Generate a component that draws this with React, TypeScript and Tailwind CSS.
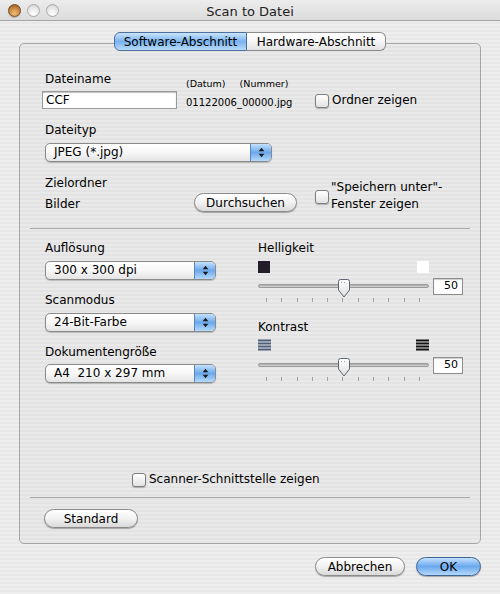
import React from "react";

const stripes =
  "bg-[repeating-linear-gradient(180deg,#eeeeee_0px,#eeeeee_2px,#e8e8e8_2px,#e8e8e8_4px)]";

function Arrows() {
  return (
    <svg width="7" height="11" viewBox="0 0 7 11">
      <path d="M3.5 0.8L6.3 4.2H0.7Z" fill="#1a1a1a" />
      <path d="M3.5 10.2L6.3 6.8H0.7Z" fill="#1a1a1a" />
    </svg>
  );
}

function Popup({ width, label }: { width: string; label: string }) {
  return (
    <div
      className={`flex h-[19px] ${width} overflow-hidden rounded-[5px] border border-[#8a8a8a] bg-gradient-to-b from-white via-[#f7f7f7] to-[#e4e4e4] shadow-[0_1px_1px_rgba(0,0,0,0.2)]`}
    >
      <div className="flex-1 whitespace-pre pl-[8px] text-[12px] leading-[17px] text-black">{label}</div>
      <div className="flex w-[21px] items-center justify-center border-l border-[#5d85bd] bg-gradient-to-b from-[#c4e2fc] via-[#6ba8ec] to-[#b5dafb]">
        <Arrows />
      </div>
    </div>
  );
}

function Checkbox() {
  return (
    <div className="h-[14px] w-[14px] shrink-0 rounded-[3px] border border-[#7d7d7d] bg-gradient-to-b from-white to-[#e2e2e2] shadow-[0_1px_1px_rgba(0,0,0,0.25)]" />
  );
}

function Button({ width, label }: { width: string; label: string }) {
  return (
    <div
      className={`flex h-[19px] ${width} items-center justify-center rounded-full border border-[#8b8b8b] bg-gradient-to-b from-white via-[#f2f2f2] to-[#d9d9d9] text-[12px] text-black shadow-[0_1px_1px_rgba(0,0,0,0.3)]`}
    >
      {label}
    </div>
  );
}

function Knob() {
  return (
    <svg width="14" height="19" viewBox="0 0 14 19">
      <defs>
        <linearGradient id="kg" x1="0" y1="0" x2="0" y2="1">
          <stop offset="0" stopColor="#ffffff" />
          <stop offset="1" stopColor="#dedede" />
        </linearGradient>
      </defs>
      <path
        d="M1.5 2.5Q1.5 0.5 3.5 0.5H10.5Q12.5 0.5 12.5 2.5V11L7 18L1.5 11Z"
        fill="url(#kg)"
        stroke="#5c6470"
      />
      <path d="M4 3.5H10" stroke="#9aa7b8" strokeWidth="1" strokeDasharray="1 2" />
    </svg>
  );
}

function Slider() {
  const ticks = Array.from({ length: 11 });
  return (
    <div className="flex flex-col">
      <div className="flex h-[18px] items-center">
        <div className="relative h-[18px] w-[171px]">
          <div className="mt-[7px] h-[4px] w-[171px] rounded-full border border-[#9c9c9c] bg-gradient-to-b from-[#a8a8a8] to-[#d6d6d6]" />
          <div className="absolute left-[79px] top-[2px]">
            <Knob />
          </div>
        </div>
        <div className="ml-[4px] flex h-[17px] w-[30px] items-center justify-end border border-[#8e8e8e] bg-white pr-[4px] text-[11px] text-black shadow-[inset_0_1px_1px_rgba(0,0,0,0.2)]">
          50
        </div>
      </div>
      <div className="ml-[8px] mt-[3px] flex w-[154px] justify-between">
        {ticks.map((_, i) => (
          <div key={i} className="h-[4px] w-px bg-[#a0a0a0]" />
        ))}
      </div>
    </div>
  );
}

function Lines({ color }: { color: string }) {
  return (
    <svg width="13" height="13" viewBox="0 0 13 13">
      {[0, 3, 6, 9].map((y) => (
        <rect key={y} x="0" y={y + 0.5} width="13" height="2" fill={color} />
      ))}
    </svg>
  );
}

function Light({ kind }: { kind: "close" | "off" }) {
  return kind === "close" ? (
    <div className="h-[13px] w-[13px] rounded-full border border-[#7a4a1c] bg-[radial-gradient(circle_at_50%_75%,#f0c07a_0%,#c58440_55%,#8a5424_100%)] shadow-[0_1px_1px_rgba(0,0,0,0.2)]" />
  ) : (
    <div className="h-[13px] w-[13px] rounded-full border border-[#a9a9a9] bg-[radial-gradient(circle_at_50%_80%,#ffffff_0%,#e6e6e6_60%,#c9c9c9_100%)]" />
  );
}

export default function App() {
  return (
    <div
      className={`flex h-[594px] w-[500px] flex-col overflow-hidden ${stripes} font-['DejaVu_Sans',sans-serif] text-black`}
    >
      {/* title bar */}
      <div className="relative flex h-[21px] items-center border-b border-[#a5a5a5] bg-gradient-to-b from-[#ececec] to-[#dcdcdc]">
        <div className="ml-[8px] flex gap-[6px]">
          <Light kind="close" />
          <Light kind="off" />
          <Light kind="off" />
        </div>
        <div className="absolute inset-x-0 top-[2px] text-center text-[13px] text-[#222]">
          Scan to Datei
        </div>
      </div>

      {/* tabs */}
      <div className="relative z-10 mt-[11px] flex justify-center">
        <div className="flex h-[19px] w-[133px] items-center justify-center whitespace-nowrap rounded-l-[6px] border border-[#4f6f9f] bg-gradient-to-b from-[#c9e4fb] via-[#7ab3ef] to-[#b7dbfa] text-[12px]">
          Software-Abschnitt
        </div>
        <div className="flex h-[19px] w-[139px] items-center justify-center whitespace-nowrap rounded-r-[6px] border border-l-0 border-[#8b8b8b] bg-gradient-to-b from-white via-[#f6f6f6] to-[#e2e2e2] text-[12px]">
          Hardware-Abschnitt
        </div>
      </div>

      {/* group box */}
      <div className="ml-[19px] mt-[-8px] flex h-[501px] w-[462px] flex-col rounded-[5px] border border-[#a6a6a6] bg-[repeating-linear-gradient(180deg,#e9e9e9_0px,#e9e9e9_2px,#e3e3e3_2px,#e3e3e3_4px)]">
        <div className="flex flex-col pl-[25px] pt-[28px]">
          {/* Dateiname row */}
          <div className="flex items-start">
            <div className="flex w-[132px] flex-col">
              <div className="text-[12px] leading-[15px]">Dateiname</div>
              <div className="-ml-[3px] mt-[4px] flex h-[18px] w-[135px] items-center border border-[#9a9a9a] bg-white pl-[3px] text-[12px] shadow-[inset_0_1px_1px_rgba(0,0,0,0.25)]">
                CCF
              </div>
            </div>
            <div className="ml-[9px] flex w-[129px] flex-col">
              <div className="mt-[6px] flex text-[9.5px] leading-[11px]">
                <span>(Datum)</span>
                <span className="ml-[14px]">(Nummer)</span>
              </div>
              <div className="mt-[7px] text-[10px] leading-[13px]">01122006_00000.jpg</div>
            </div>
            <div className="mt-[21px] flex items-center gap-[3px]">
              <Checkbox />
              <span className="text-[12px] leading-[15px]">Ordner zeigen</span>
            </div>
          </div>

          {/* Dateityp */}
          <div className="mt-[14px] text-[12px] leading-[15px]">Dateityp</div>
          <div className="mt-[5px]">
            <Popup width="w-[227px]" label="JPEG (*.jpg)" />
          </div>

          {/* Zielordner */}
          <div className="mt-[14px] flex items-start">
            <div className="flex w-[149px] flex-col text-[12px] leading-[15px]">
              <div>Zielordner</div>
              <div className="mt-[6px]">Bilder</div>
            </div>
            <div className="mt-[17px]">
              <Button width="w-[103px]" label="Durchsuchen" />
            </div>
            <div className="ml-[18px] mt-[3px] flex items-start gap-[2px]">
              <div className="mt-[11px]">
                <Checkbox />
              </div>
              <div className="text-[12px] leading-[17px]">
                <div>"Speichern unter"-</div>
                <div>Fenster zeigen</div>
              </div>
            </div>
          </div>
        </div>

        <div className="mx-[10px] mt-[15px] h-px bg-[#a9a9a9]" />

        {/* lower section */}
        <div className="flex pl-[25px] pt-[12px]">
          <div className="flex w-[213px] flex-col">
            <div className="text-[12px] leading-[15px]">Auflösung</div>
            <div className="mt-[5px]">
              <Popup width="w-[171px]" label="300 x 300 dpi" />
            </div>
            <div className="mt-[13px] text-[12px] leading-[15px]">Scanmodus</div>
            <div className="mt-[5px]">
              <Popup width="w-[171px]" label="24-Bit-Farbe" />
            </div>
            <div className="mt-[13px] text-[12px] leading-[15px]">Dokumentengröße</div>
            <div className="mt-[4px]">
              <Popup width="w-[171px]" label="A4  210 x 297 mm" />
            </div>
          </div>
          <div className="flex flex-col">
            <div className="text-[12px] leading-[15px]">Helligkeit</div>
            <div className="mt-[5px] flex w-[171px] justify-between">
              <div className="h-[12px] w-[12px] bg-[#231d2a]" />
              <div className="h-[12px] w-[12px] bg-white" />
            </div>
            <div className="mt-[4px]">
              <Slider />
            </div>
            <div className="mt-[18px] text-[12px] leading-[15px]">Kontrast</div>
            <div className="mt-[4px] flex w-[171px] justify-between">
              <Lines color="#4e5f7c" />
              <Lines color="#111111" />
            </div>
            <div className="mt-[4px]">
              <Slider />
            </div>
          </div>
        </div>

        <div className="ml-[112px] mt-[89px] flex items-center gap-[3px]">
          <Checkbox />
          <span className="text-[12px] leading-[15px]">Scanner-Schnittstelle zeigen</span>
        </div>

        <div className="mx-[10px] mt-[10px] h-px bg-[#a9a9a9]" />

        <div className="ml-[24px] mt-[11px]">
          <Button width="w-[94px]" label="Standard" />
        </div>
      </div>

      {/* bottom buttons */}
      <div className="mt-[13px] flex justify-end gap-[11px] pr-[19px]">
        <Button width="w-[90px]" label="Abbrechen" />
        <div className="flex h-[19px] w-[65px] items-center justify-center rounded-full border border-[#3d6395] bg-gradient-to-b from-[#c3e1fc] via-[#6aa8ed] to-[#b4d9fb] text-[12px] shadow-[0_1px_1px_rgba(0,0,0,0.3)]">
          OK
        </div>
      </div>
    </div>
  );
}
